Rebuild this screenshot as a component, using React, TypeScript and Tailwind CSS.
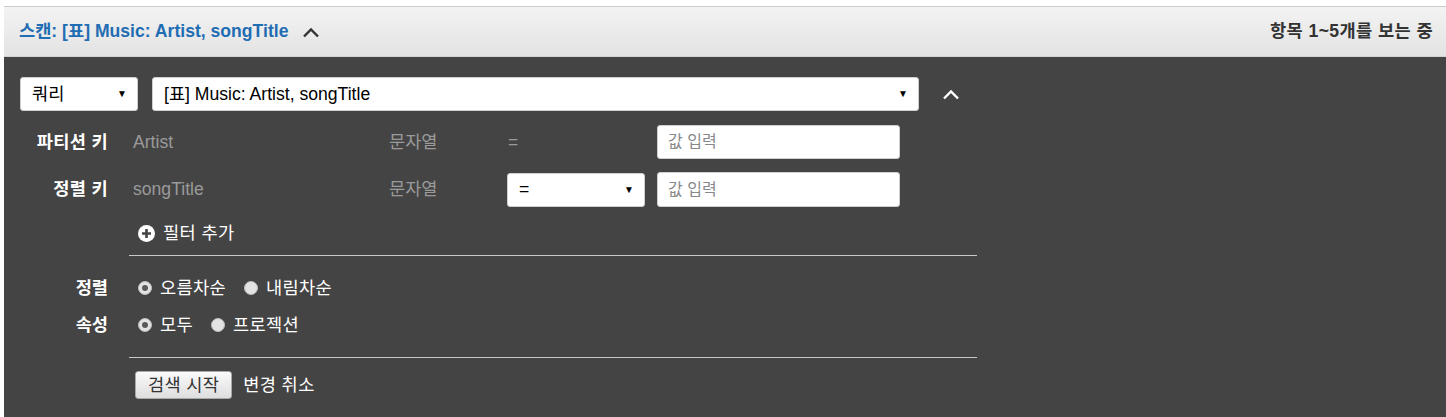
import React from 'react'

const kr = { fontFamily: '"Liberation Sans", "Noto Sans CJK KR", sans-serif' }

function ChevronUp({ className }: { className?: string }) {
  return (
    <svg width="18" height="11" viewBox="0 0 18 11" className={className}>
      <path d="M2 9.5 L9 2.5 L16 9.5" fill="none" stroke="currentColor" strokeWidth="2.4" />
    </svg>
  )
}

function FakeSelect({ text, className }: { text: string; className: string }) {
  return (
    <div className={`flex items-center justify-between bg-white rounded-[3px] border border-[#cfcfcf] text-black ${className}`}>
      <span className="text-[17.6px]">{text}</span>
      <span className="text-[10px] leading-none text-black">▼</span>
    </div>
  )
}

function Radio({ checked, label }: { checked?: boolean; label: string }) {
  return (
    <label className="flex items-center gap-[8px]">
      <span className="w-[14px] h-[14px] rounded-full bg-[#e3e3e3] border border-[#bdbdbd] flex items-center justify-center">
        {checked && <span className="w-[6px] h-[6px] rounded-full bg-[#5a5a5a]" />}
      </span>
      <span className="text-[17.6px] text-white tracking-[0.3px]">{label}</span>
    </label>
  )
}

export default function App() {
  return (
    <div className="min-h-[417px] bg-white pl-[4px] pt-[6px]" style={kr}>
      <div className="border-t border-[#cccccc]">
        <div className="h-[50px] flex items-center justify-between pl-[15px] pr-[13px] bg-gradient-to-b from-[#f3f3f3] to-[#e3e3e3] border-b border-[#d2d2d2]">
          <div className="flex items-center gap-[14px]">
            <span className="text-[17.6px] font-bold text-[#1f6db3]">스캔: [표] Music: Artist, songTitle</span>
            <ChevronUp className="text-[#333] mt-[2px]" />
          </div>
          <span className="text-[17.6px] font-bold text-[#333] tracking-[0.4px]">항목 1~5개를 보는 중</span>
        </div>

        <div className="bg-[#444444] pt-[20px] pb-[20px] min-h-[359px]">
          {/* top row */}
          <div className="flex items-center pl-[16px]">
            <FakeSelect text="쿼리" className="w-[118px] h-[34px] pl-[11px] pr-[10px]" />
            <FakeSelect text="[표] Music: Artist, songTitle" className="ml-[14px] w-[767px] h-[34px] pl-[11px] pr-[10px]" />
            <ChevronUp className="text-white ml-[23px]" />
          </div>

          {/* key rows */}
          <div className="mt-[14px] flex flex-col gap-[13px]">
            <div className="flex items-center h-[34px]">
              <span className="w-[104px] text-right text-[17.6px] font-bold text-white tracking-[0.3px]">파티션 키</span>
              <span className="ml-[25px] w-[256px] text-[17.6px] text-[#9a9a9a]">Artist</span>
              <span className="w-[119px] text-[17.6px] text-[#9a9a9a]">문자열</span>
              <span className="w-[149px] text-[17.6px] text-[#9a9a9a]">=</span>
              <div className="w-[243px] h-[34px] bg-white rounded-[3px] border border-[#cfcfcf] flex items-center pl-[10px] text-[16px] text-[#888]">값 입력</div>
            </div>
            <div className="flex items-center h-[35px]">
              <span className="w-[104px] text-right text-[17.6px] font-bold text-white tracking-[0.3px]">정렬 키</span>
              <span className="ml-[25px] w-[256px] text-[17.6px] text-[#9a9a9a]">songTitle</span>
              <span className="w-[118px] text-[17.6px] text-[#9a9a9a]">문자열</span>
              <FakeSelect text="=" className="w-[138px] h-[34px] pl-[11px] pr-[10px]" />
              <div className="ml-[12px] w-[243px] h-[35px] bg-white rounded-[3px] border border-[#cfcfcf] flex items-center pl-[10px] text-[16px] text-[#888]">값 입력</div>
            </div>
          </div>

          <div className="ml-[125px] w-[848px]">
            <div className="flex items-center gap-[8px] pl-[9px] mt-[12px] h-[28px]">
              <svg width="17" height="17" viewBox="0 0 17 17">
                <circle cx="8.5" cy="8.5" r="8.5" fill="#ffffff" />
                <path d="M8.5 4v9M4 8.5h9" stroke="#444" strokeWidth="2.6" />
              </svg>
              <span className="text-[17.6px] text-white tracking-[0.4px]">필터 추가</span>
            </div>
            <div className="mt-[8px] border-t border-[#c8c8c8]" />
          </div>

          <div className="mt-[21px] flex flex-col gap-[15px]">
            <div className="flex items-center h-[22px]">
              <span className="w-[104px] text-right text-[17.6px] font-bold text-white">정렬</span>
              <div className="ml-[30px] flex items-center gap-[18px]">
                <Radio checked label="오름차순" />
                <Radio label="내림차순" />
              </div>
            </div>
            <div className="flex items-center h-[22px]">
              <span className="w-[104px] text-right text-[17.6px] font-bold text-white">속성</span>
              <div className="ml-[30px] flex items-center gap-[18px]">
                <Radio checked label="모두" />
                <Radio label="프로젝션" />
              </div>
            </div>
          </div>

          <div className="ml-[125px] w-[848px]">
            <div className="mt-[21px] border-t border-[#c8c8c8]" />
            <div className="flex items-center mt-[13px] pl-[6px] gap-[11px]">
              <button className="h-[28px] px-[12px] rounded-[3px] border border-[#a9a9a9] bg-gradient-to-b from-[#fafafa] to-[#dedede] text-[17.6px] text-[#333] tracking-[0.3px]">검색 시작</button>
              <span className="text-[17.6px] text-white tracking-[0.4px]">변경 취소</span>
            </div>
          </div>
        </div>
      </div>
    </div>
  )
}
